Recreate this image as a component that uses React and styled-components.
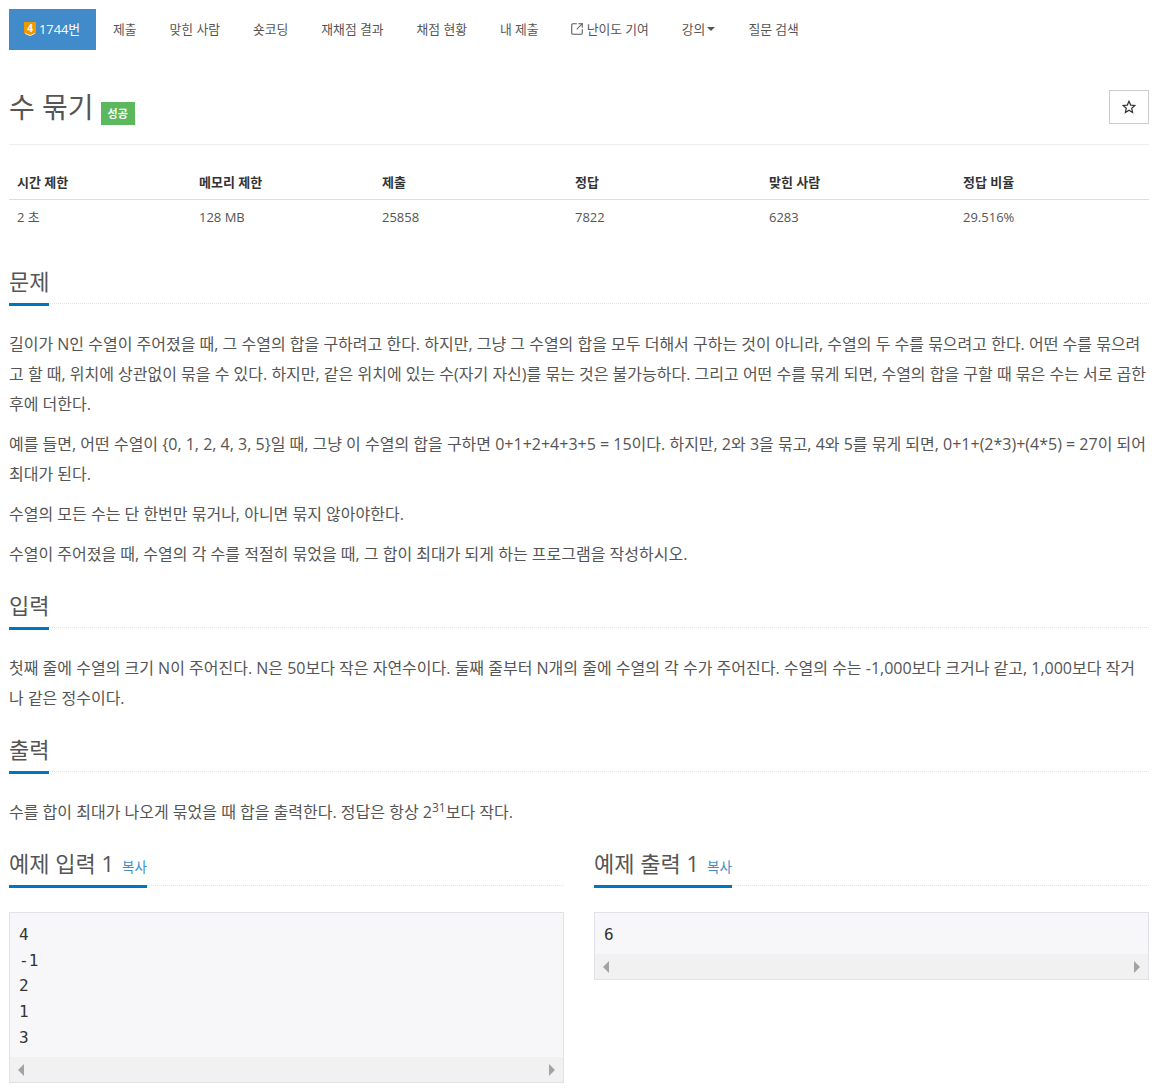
import React from 'react';
import styled, { createGlobalStyle } from 'styled-components';
import { SquareArrowOutUpRight } from 'lucide-react';

const GlobalStyle = createGlobalStyle`
  body {
    margin: 0;
    background: #fff;
    color: #555;
    font-family: 'Open Sans', 'Noto Sans CJK KR', sans-serif;
    font-size: 13px;
  }
`;

const Page = styled.div`
  padding: 9px 7px 0 9px;
  height: 1081px;
  overflow: hidden;
`;

const Nav = styled.nav`
  display: flex;
  height: 41px;
  align-items: stretch;
  font-size: 12.8px;
`;

const NavItem = styled.a`
  display: flex;
  align-items: center;
  gap: ${(p) => (p.$gap ? p.$gap : 0)}px;
  padding: 0 16px 2px ${(p) => p.$left || 17}px;
  color: ${(p) => (p.$active ? '#fff' : '#555')};
  background: ${(p) => (p.$active ? '#428bca' : 'transparent')};
  white-space: nowrap;
`;

const Caret = styled.span`
  margin-left: 2px;
  border-top: 4px solid #555;
  border-left: 4px solid transparent;
  border-right: 4px solid transparent;
`;

const TitleRow = styled.div`
  display: flex;
  justify-content: space-between;
  align-items: flex-start;
  height: 95px;
  box-sizing: border-box;
  border-bottom: 1px solid #eee;
  padding-top: 40px;
`;

const TitleLeft = styled.div`
  display: flex;
  align-items: flex-end;
  gap: 7px;
`;

const Title = styled.h1`
  margin: 0;
  font-size: 28px;
  line-height: 34px;
  font-weight: 400;
  color: #555;
`;

const Badge = styled.span`
  display: block;
  background: #5cb85c;
  color: #fff;
  font-size: 11px;
  font-weight: 700;
  line-height: 23px;
  height: 23px;
  padding: 0 7px;
  margin-bottom: -1px;
`;

const StarButton = styled.button`
  width: 40px;
  height: 34px;
  display: flex;
  align-items: center;
  justify-content: center;
  padding: 0;
  background: #fff;
  border: 1px solid #ccc;
  color: #333;
`;

const InfoTable = styled.table`
  width: 100%;
  margin-top: 20px;
  border-collapse: collapse;
  table-layout: fixed;
  font-size: 13px;

  th {
    text-align: left;
    font-weight: 700;
    padding: 8px;
    line-height: 18px;
    height: 18px;
    border-bottom: 1px solid #ddd;
    color: #333;
  }

  td {
    padding: 8px;
    line-height: 18px;
    color: #555;
  }
`;

const Section = styled.section`
  margin-top: ${(p) => p.$top}px;
`;

const Headline = styled.div`
  display: flex;
  border-bottom: 1px dotted #e5e5e5;
  height: 35px;
  margin-bottom: ${(p) => (p.$small ? 26 : 25)}px;
`;

const HeadlineText = styled.h2`
  margin: 0;
  height: 35px;
  border-bottom: 3px solid #0076c0;
  font-size: 22px;
  line-height: 26px;
  font-weight: 400;
  color: #555;
  white-space: nowrap;
`;

const CopyLink = styled.a`
  margin-left: 8px;
  font-size: 13.5px;
  color: #428bca;
`;

const Para = styled.p`
  margin: 0 0 10px;
  font-size: 16px;
  line-height: 30px;
  color: #555;

  &:last-child {
    margin-bottom: 0;
  }

  sup {
    font-size: 12px;
    line-height: 0;
  }
`;

const SampleRow = styled.div`
  display: grid;
  grid-template-columns: 555px 555px;
  gap: 30px;
  margin-top: 23px;
  align-items: start;
`;

const SampleBox = styled.div`
  border: 1px solid #e1e1e8;
  background: #f7f7f9;
`;

const SamplePre = styled.pre`
  margin: 0;
  padding: 9px 9px 6.5px;
  font-family: 'DejaVu Sans Mono', monospace;
  font-size: 16px;
  line-height: 25.7px;
  color: #333;
`;

const Scrollbar = styled.div`
  display: flex;
  justify-content: space-between;
  align-items: center;
  height: 25px;
  padding: 0 8px;
  background: #f1f1f1;
`;

const Arrow = styled.span`
  border-top: 6px solid transparent;
  border-bottom: 6px solid transparent;
  border-right: ${(p) => (p.$left ? '6px solid #a3a3a3' : '0')};
  border-left: ${(p) => (p.$left ? '0' : '6px solid #a3a3a3')};
`;

const ProblemBadge = () => (
  <svg width="12" height="14" viewBox="0 0 12 14">
    <path d="M0 0h12v11L6 14L0 11z" fill="#ec9a00" />
    <path d="M1 11.4l5 2.2 5-2.2" stroke="#fff" strokeWidth="0.8" fill="none" />
    <text x="6" y="10" textAnchor="middle" fontSize="10" fontWeight="700" fill="#fff" fontFamily="Open Sans">4</text>
  </svg>
);

const StarIcon = () => (
  <svg width="14" height="14" viewBox="0 0 14 14">
    <path
      d="M7 1.2l1.7 3.9 4.2.4-3.2 2.8.9 4.2L7 10.3l-3.6 2.2.9-4.2L1.1 5.5l4.2-.4z"
      fill="none"
      stroke="#333"
      strokeWidth="1.2"
    />
  </svg>
);

const navItems = ['제출', '맞힌 사람', '숏코딩', '재채점 결과', '채점 현황', '내 제출'];
const tableHead = ['시간 제한', '메모리 제한', '제출', '정답', '맞힌 사람', '정답 비율'];
const tableRow = ['2 초', '128 MB', '25858', '7822', '6283', '29.516%'];
const colWidths = [182, 183, 193, 194, 194, 194];

const Sample = ({ title, text }) => (
  <div>
    <Headline $small>
      <HeadlineText>
        {title}
        <CopyLink>복사</CopyLink>
      </HeadlineText>
    </Headline>
    <SampleBox>
      <SamplePre>{text}</SamplePre>
      <Scrollbar>
        <Arrow $left />
        <Arrow />
      </Scrollbar>
    </SampleBox>
  </div>
);

const App = () => {
  return (
    <Page>
      <GlobalStyle />
      <Nav>
        <NavItem $active $gap={3} $left={15}>
          <ProblemBadge />
          1744번
        </NavItem>
        {navItems.map((item) => (
          <NavItem key={item}>{item}</NavItem>
        ))}
        <NavItem $gap={3} $left={15}>
          <SquareArrowOutUpRight size={14} strokeWidth={1.8} />
          난이도 기여
        </NavItem>
        <NavItem>
          강의
          <Caret />
        </NavItem>
        <NavItem>질문 검색</NavItem>
      </Nav>
      <TitleRow>
        <TitleLeft>
          <Title>수 묶기</Title>
          <Badge>성공</Badge>
        </TitleLeft>
        <StarButton aria-label="star">
          <StarIcon />
        </StarButton>
      </TitleRow>
      <InfoTable>
        <colgroup>
          {colWidths.map((w, i) => (
            <col key={i} style={{ width: w }} />
          ))}
        </colgroup>
        <thead>
          <tr>
            {tableHead.map((h) => (
              <th key={h}>{h}</th>
            ))}
          </tr>
        </thead>
        <tbody>
          <tr>
            {tableRow.map((c) => (
              <td key={c}>{c}</td>
            ))}
          </tr>
        </tbody>
      </InfoTable>
      <Section $top={34}>
        <Headline>
          <HeadlineText>문제</HeadlineText>
        </Headline>
        <Para>
          길이가 N인 수열이 주어졌을 때, 그 수열의 합을 구하려고 한다. 하지만, 그냥 그 수열의 합을 모두 더해서 구하는 것이 아니라, 수열의 두 수를 묶으려고 한다. 어떤 수를 묶으려고 할 때, 위치에 상관없이 묶을 수 있다. 하지만, 같은 위치에 있는 수(자기 자신)를 묶는 것은 불가능하다. 그리고 어떤 수를 묶게 되면, 수열의 합을 구할 때 묶은 수는 서로 곱한 후에 더한다.
        </Para>
        <Para>
          예를 들면, 어떤 수열이 {'{0, 1, 2, 4, 3, 5}'}일 때, 그냥 이 수열의 합을 구하면 0+1+2+4+3+5 = 15이다. 하지만, 2와 3을 묶고, 4와 5를 묶게 되면, 0+1+(2*3)+(4*5) = 27이 되어 최대가 된다.
        </Para>
        <Para>수열의 모든 수는 단 한번만 묶거나, 아니면 묶지 않아야한다.</Para>
        <Para>수열이 주어졌을 때, 수열의 각 수를 적절히 묶었을 때, 그 합이 최대가 되게 하는 프로그램을 작성하시오.</Para>
      </Section>
      <Section $top={23}>
        <Headline>
          <HeadlineText>입력</HeadlineText>
        </Headline>
        <Para>
          첫째 줄에 수열의 크기 N이 주어진다. N은 50보다 작은 자연수이다. 둘째 줄부터 N개의 줄에 수열의 각 수가 주어진다. 수열의 수는 -1,000보다 크거나 같고, 1,000보다 작거나 같은 정수이다.
        </Para>
      </Section>
      <Section $top={23}>
        <Headline>
          <HeadlineText>출력</HeadlineText>
        </Headline>
        <Para>
          수를 합이 최대가 나오게 묶었을 때 합을 출력한다. 정답은 항상 2<sup>31</sup>보다 작다.
        </Para>
      </Section>
      <SampleRow>
        <Sample title="예제 입력 1" text={'4\n-1\n2\n1\n3'} />
        <Sample title="예제 출력 1" text="6" />
      </SampleRow>
    </Page>
  );
};

export default App;
